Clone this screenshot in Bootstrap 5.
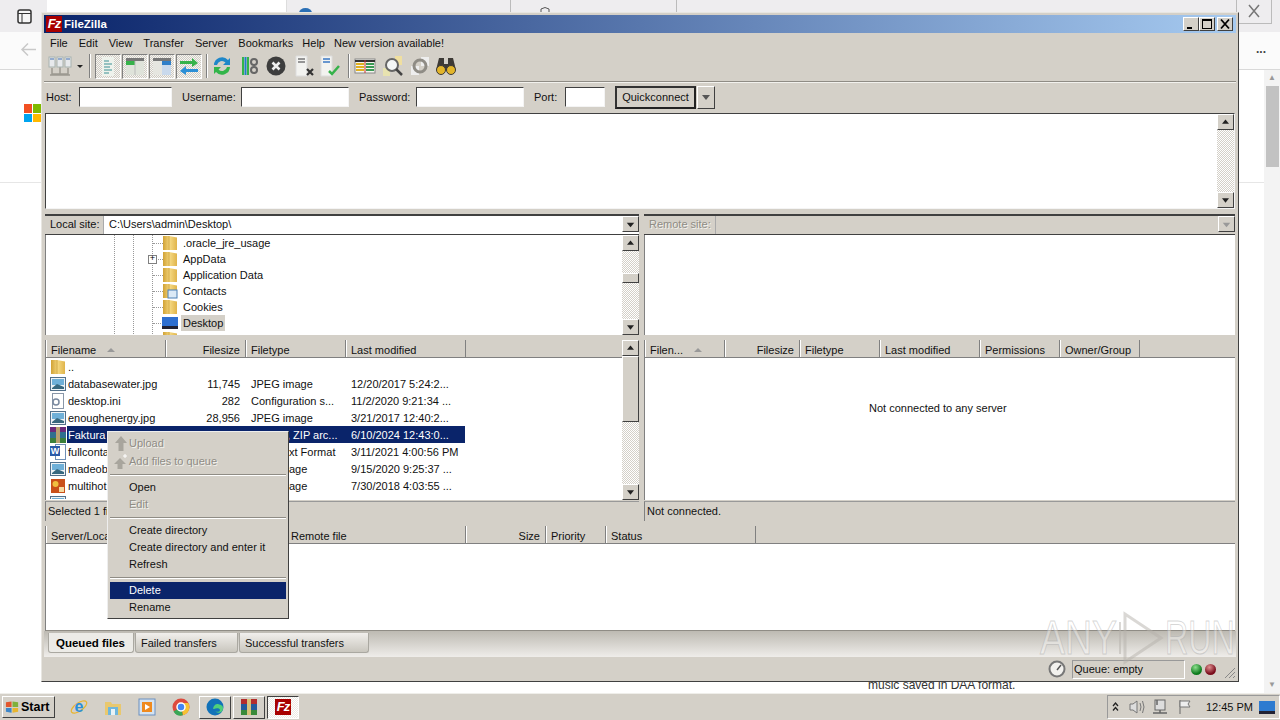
<!DOCTYPE html>
<html lang="en">
<head>
<meta charset="UTF-8">
<title>FileZilla</title>
<link href="https://cdn.jsdelivr.net/npm/bootstrap@5.3.3/dist/css/bootstrap.min.css" rel="stylesheet">
<style>
  html, body { width: 1280px; height: 720px; overflow: hidden; }
  body { font: 11px/14px "Liberation Sans", sans-serif; color: #111; background: #fff; position: relative; }
  svg { display: block; flex: none; }

  /* pixel widths and small gaps used by the columns and toolbar */
  .w40 { width: 40px; } .w60 { width: 60px; } .w72 { width: 72px; } .w75 { width: 75px; } .w80 { width: 80px; }
  .w93 { width: 93px; } .w100 { width: 100px; } .w108 { width: 108px; } .w120 { width: 120px; } .w150 { width: 150px; } .w180 { width: 180px; }
  .ml2 { margin-left: 2px; } .ml3 { margin-left: 3px; } .ml4 { margin-left: 4px; } .ml5 { margin-left: 5px; } .ml6 { margin-left: 6px; } .ml7 { margin-left: 7px; } .ml8 { margin-left: 8px; } .ml9 { margin-left: 9px; }
  .mr3 { margin-right: 3px; } .mr4 { margin-right: 4px; }

  /* browser behind the window */
  .br-wrap { height: 693px; }
  .br-strip { height: 32px; background: #eeedef; }
  .br-side { margin: 9px 0 0 17px; }
  .br-tab { width: 240px; height: 12px; margin-left: 15px; background: #fff; border-right: 1px solid #ddd; }
  .br-fav1 { margin: 8px 0 0 12px; }
  .br-tick { width: 1px; height: 12px; background: #bbb; flex: none; }
  .br-tick1 { margin-left: 198px; }
  .br-tick2 { margin-left: 126px; }
  .br-fav2 { margin: 7px 0 0 29px; }
  .br-ctl { margin: 0 8px 0 auto; width: 36px; height: 24px; border: 1px solid #bbb; border-top: 0; }
  .br-ctl svg { margin: 4px auto 0; }
  .br-bar { height: 38px; background: #fbfbfb; border-bottom: 1px solid #d9d9d9; }
  .br-back { margin: 10px 0 0 20px; }
  .br-dots { margin: 10px 6px 0 auto; font: bold 12px/14px "Liberation Sans", sans-serif; color: #444; width: 18px; }
  .br-page { height: 623px; }
  .ms-logo { width: 17px; height: 18px; margin: 34px 0 0 24px; display: grid; grid-template-columns: 1fr 1fr; gap: 1px; }
  .ms-logo i { display: block; }
  .ms-r { background: #f25022; } .ms-g { background: #7fba00; } .ms-b { background: #00a4ef; } .ms-y { background: #ffb900; }
  .br-line { height: 1px; background: #e6e6e6; margin-top: 60px; }
  .br-note { margin: auto 0 2px 868px; font-size: 12px; line-height: 12px; color: #333; }
  .br-scroll { width: 16px; background: #f3f3f3; }
  .br-arrow { height: 16px; text-align: center; color: #999; font-size: 8px; line-height: 16px; flex: none; }
  .br-thumb { height: 81px; width: 13px; margin: 0 auto; background: #c2c2c2; }

  /* filezilla window */
  .fz-win { position: absolute; left: 41px; top: 12px; width: 1198px; height: 670px; padding: 2px; background: #d4d0c8; border: 1px solid; border-color: #e8e6e1 #404040 #404040 #e8e6e1; }
  .fz-win > * { flex: none; }
  .fz-title { height: 18px; background: linear-gradient(90deg, #0a246a, #a6caf0); color: #fff; font-weight: bold; font-size: 11.5px; }
  .fz-logo { width: 16px; height: 16px; background: #a80000; color: #fff; font: italic bold 13px/16px "Liberation Sans", sans-serif; text-align: center; margin: 0 2px 0 2px; letter-spacing: -1px; flex: none; }
  .fz-winbtn { width: 16px; height: 14px; background: #d4d0c8; border: 1px solid; border-color: #fff #404040 #404040 #fff; }
  .fz-menu { height: 20px; padding-left: 6px; gap: 11px; }
  .fz-tight { margin-left: -2px; }
  .fz-tools { height: 29px; padding: 0 0 2px 4px; border-bottom: 1px solid #8f8c85; box-shadow: 0 1px 0 #f2f1ed; }
  .fz-sep { width: 2px; height: 24px; border-left: 1px solid #808080; border-right: 1px solid #fff; }
  .fz-toggle { width: 26px; height: 25px; margin-right: 1px; border: 1px solid; border-color: #808080 #fff #fff #808080; background: repeating-conic-gradient(#f6f5f2 0 25%, #cfcbc3 0 50%) 0 0/2px 2px; }
  .fz-quick { height: 30px; padding-left: 2px; margin-bottom: 1px; }
  .fz-lab { padding-left: 10px; box-sizing: content-box; }
  .fz-lab-host { width: 33px; padding-left: 0; }
  .fz-lab-user { width: 59px; } .fz-lab-pass { width: 57px; } .fz-lab-port { width: 31px; }
  .fz-input { height: 20px; background: #fff; border: 1px solid; border-color: #404040 #f4f4f4 #f4f4f4 #404040; }
  .fz-qbtn { width: 81px; height: 23px; border: 2px solid; border-color: #333 #222 #222 #333; text-align: center; line-height: 18px; margin-left: 10px; }
  .fz-qarrow { width: 18px; height: 23px; margin-left: 1px; border: 1px solid; border-color: #fff #404040 #404040 #fff; }

  .fz-sunken { background: #fff; border: 1px solid; border-color: #404040 #f4f4f4 #f4f4f4 #404040; }
  .fz-log { height: 96px; margin: 0 1px; }
  .fz-panes { margin-top: 5px; display: grid; grid-template-columns: 594px 591px; column-gap: 5px; padding-left: 1px; }
  .fz-site { height: 21px; border-top: 2px solid #404040; border-bottom: 1px solid #404040; background: #fff; }
  .fz-site-off { background: #d4d0c8; }
  .fz-site-label { width: 59px; padding-left: 5px; background: #d4d0c8; border-right: 1px solid #aaa; line-height: 17px; height: 100%; flex: none; }
  .fz-site-remote { width: 72px; }
  .fz-path { line-height: 17px; padding-left: 5px; }
  .fz-drop { width: 17px; }
  .fz-tree { height: 100px; background: #fff; border-left: 1px solid #808080; }
  .fz-tree-body {
    overflow: hidden; position: relative;
    background:
      repeating-linear-gradient(#999 0 1px, transparent 1px 2px) 68px 0/1px 100% no-repeat,
      repeating-linear-gradient(#999 0 1px, transparent 1px 2px) 87px 0/1px 100% no-repeat,
      repeating-linear-gradient(#999 0 1px, transparent 1px 2px) 106px 0/1px 100% no-repeat;
  }
  .fz-node { height: 16px; padding-left: 116px; position: relative; line-height: 16px; }
  .fz-node::before { content: ""; position: absolute; left: 107px; top: 8px; width: 10px; border-top: 1px dotted #999; }
  .fz-node svg { margin-right: 5px; position: relative; }
  .fz-cur { background: #d4d0c8; padding: 0 2px; margin-left: -2px; }
  .fz-plus { position: absolute; left: 102px; top: 4px; width: 9px; height: 9px; background: #fff; border: 1px solid #808080; font: 9px/7px "Liberation Mono", monospace; text-align: center; z-index: 1; color: #000; }

  .fz-sb { width: 17px; flex: none; background: repeating-conic-gradient(#fff 0 25%, #d4d0c8 0 50%) 0 0/2px 2px; }
  .fz-sbbtn { height: 16px; background: #d4d0c8; border: 1px solid; border-color: #fff #404040 #404040 #fff; flex: none; }
  .fz-thumb { background: #d4d0c8; border: 1px solid; border-color: #fff #404040 #404040 #fff; flex: none; }
  .fz-thumb-tree { height: 10px; margin-top: 22px; }
  .fz-thumb-list { height: 66px; }

  .fz-list { height: 160px; margin-top: 5px; background: #fff; border-left: 1px solid #808080; }
  .fz-head { height: 18px; background: #d4d0c8; border-bottom: 1px solid #808080; }
  .fz-hc { height: 17px; padding: 0 5px 0 4px; line-height: 21px; border-right: 1px solid #808080; border-left: 1px solid #fff; white-space: nowrap; overflow: hidden; flex: none; }
  .fz-sort { display: inline-block; margin-left: 8px; border: 4px solid transparent; border-top: 0; border-bottom: 4px solid #999; vertical-align: 2px; }
  .fz-rows { height: 141px; overflow: hidden; }
  .fz-row { height: 17px; line-height: 18px; }
  .fz-row > div { flex: none; white-space: nowrap; overflow: hidden; }
  .fz-name { width: 119px; padding-left: 4px; display: flex; align-items: center; gap: 2px; }
  .fz-size { width: 80px; text-align: right; padding-right: 5px; }
  .fz-type { width: 100px; padding-left: 6px; }
  .fz-type-zip { padding-left: 42px; }
  .fz-type-cut { padding-left: 44px; }
  .fz-date { width: 120px; padding-left: 6px; }
  .fz-sel .fz-name span, .fz-sel .fz-size, .fz-sel .fz-type, .fz-sel .fz-date { background: #0a246a; color: #fff; }
  .fz-sel .fz-name span { flex: 1; padding-left: 1px; margin-left: -1px; }
  .fz-stat { height: 20px; margin-top: 1px; border-left: 1px solid #808080; line-height: 18px; padding-left: 2px; background: #d4d0c8; border-top: 1px solid #999; }
  .fz-nocon { height: 141px; padding: 43px 0 0 224px; }

  .fz-queue { height: 105px; margin: 5px 0 0 1px; width: 1190px; background: #fff; border-left: 1px solid #808080; border-bottom: 1px solid #8f8c85; }
  .fz-tabs { height: 26px; padding: 2px 0 0 4px; background: linear-gradient(#bdbab2, #efedea); }
  .fz-tab { height: 20px; line-height: 20px; padding-left: 5px; margin-right: 1px; background: linear-gradient(#f1efec, #c9c6be); border: 1px solid #aaa8a1; border-top: 0; border-radius: 0 0 3px 3px; }
  .fz-tab-on { width: 86px; padding-left: 7px; background: #ecebe7; font-weight: bold; font-size: 11.5px; color: #000; }
  .fz-tab-fail { width: 103px; } .fz-tab-ok { width: 130px; }
  .fz-foot { height: 22px; padding-top: 2px; }
  .fz-gauge { margin-right: 6px; }
  .fz-qbox { width: 113px; height: 19px; border: 1px solid; border-color: #999 #fff #fff #999; line-height: 16px; padding-left: 1px; }
  .fz-ball { width: 11px; height: 11px; border-radius: 50%; }
  .fz-ball-g { margin-left: 6px; background: radial-gradient(circle at 40% 30%, #8fe08f, #0c7a1c 65%); }
  .fz-ball-r { margin-left: 3px; background: radial-gradient(circle at 40% 30%, #e09090, #7a0c1c 65%); }
  .fz-grip { margin: 6px 0 0 7px; }

  /* context menu */
  .fz-ctx { position: absolute; left: 65px; top: 418px; width: 182px; height: 188px; padding: 3px 2px; background: #d4d0c8; border: 1px solid; border-color: #eee #404040 #404040 #eee; z-index: 5; }
  .fz-item { height: 17px; line-height: 17px; padding-left: 19px; position: relative; }
  .fz-item svg { position: absolute; left: 3px; top: 0; }
  .fz-item-first { margin-bottom: 1px; }
  .fz-off { color: #8f8c85; text-shadow: 1px 1px 0 #f3f2ee; }
  .fz-hi { background: #0a246a; color: #fff; }
  .fz-rule { height: 2px; margin: 4px 0 3px; border-top: 1px solid #8f8c85; border-bottom: 1px solid #fff; }

  /* watermark */
  .wm { position: absolute; left: 1040px; top: 608px; width: 200px; height: 60px; z-index: 6; font: 48px/60px "Liberation Sans", sans-serif; pointer-events: none; color: rgba(255,255,255,.35); -webkit-text-stroke: 1px rgba(165,165,165,.45); white-space: nowrap; }
  .wm-any { width: 75px; display: inline-block; transform: scaleX(.78); transform-origin: left; }
  .wm-run { width: 70px; display: inline-block; transform: scaleX(.67); transform-origin: left; }

  /* taskbar */
  .tb { height: 27px; background: #d4d0c8; border-top: 1px solid #efeeea; position: relative; z-index: 7; }
  .tb-start { width: 53px; height: 22px; margin-left: 2px; border: 1px solid; border-color: #fff #404040 #404040 #fff; font: bold 12.500px/20px "Liberation Sans", sans-serif; color: #000; gap: 1px; padding-left: 2px; }
  .tb-apps { margin-left: 7px; }
  .tb-slot { width: 34px; height: 26px; }
  .tb-up { width: 32px; height: 23px; margin: 0 1px; border: 1px solid; border-color: #fff #404040 #404040 #fff; }
  .tb-cur { background: repeating-conic-gradient(#fff 0 25%, #ece9e4 0 50%) 0 0/2px 2px; border-color: #404040 #fff #fff #404040; }
  .tb-tray { width: 173px; height: 24px; margin-left: auto; border: 1px solid; border-color: #999 #fff #fff #999; }
  .tb-chev { width: 15px; flex: none; }
</style>
</head>
<body>
<svg width="0" height="0" class="position-absolute">
  <defs>
    <linearGradient id="g-folder" x1="0" x2="1" y1="0" y2="0">
      <stop offset="0" stop-color="#d1a235"/><stop offset=".5" stop-color="#f4d77f"/><stop offset="1" stop-color="#e0b44a"/>
    </linearGradient>
    <symbol id="i-folder" viewBox="0 0 16 16">
      <path d="M1 1h6l8 1.500V15H1z" fill="url(#g-folder)"/><path d="M7 1v14" stroke="#c4952c" stroke-width=".6"/>
    </symbol>
    <symbol id="i-image" viewBox="0 0 16 16">
      <rect x="0.500" y="1.500" width="15" height="13" fill="#eef3f6" stroke="#52708a"/><rect x="2" y="3" width="12" height="6" fill="#6fb0d8"/><path d="M2 12l5-4 7 3v2H2z" fill="#37687f"/>
    </symbol>
    <symbol id="i-arrdown" viewBox="0 0 16 16"><path d="M4 6h8l-4 5z" fill="#222"/></symbol>
    <symbol id="i-arrup" viewBox="0 0 16 16"><path d="M4 10h8l-4-5z" fill="#222"/></symbol>
  </defs>
</svg>

<div class="br-wrap d-flex flex-column">
  <div class="br-strip d-flex align-items-start">
    <svg class="br-side" width="15" height="15" viewBox="0 0 15 15"><rect x="1" y="1" width="13" height="13" rx="2" fill="#f6f6f6" stroke="#333" stroke-width="1.500"/><path d="M1 4.500h13M5 4.500V14" stroke="#333"/></svg>
    <div class="br-tab"></div>
    <svg class="br-fav1" width="13" height="5" viewBox="0 0 13 5"><path d="M0 5a6.500 5 0 0 1 13 0z" fill="#2a6fb5"/></svg>
    <div class="br-tick br-tick1"></div>
    <svg class="br-fav2" width="10" height="5" viewBox="0 0 10 5"><path d="M1 5V2q4-3 8 0v3" fill="none" stroke="#555"/></svg>
    <div class="br-tick br-tick2"></div>
    <div class="br-ctl"><svg width="12" height="14" viewBox="0 0 12 14"><path d="M1 1l10 12M11 1L1 13" stroke="#777" stroke-width="1.500"/></svg></div>
  </div>
  <div class="br-bar d-flex">
    <svg class="br-back" width="17" height="15" viewBox="0 0 17 15"><path d="M16 7.500H2M8 1.500l-6 6 6 6" fill="none" stroke="#c9c9c9" stroke-width="1.500"/></svg>
    <div class="br-dots">...</div>
  </div>
  <div class="br-page d-flex">
    <div class="flex-grow-1 d-flex flex-column">
      <div class="ms-logo"><i class="ms-r"></i><i class="ms-g"></i><i class="ms-b"></i><i class="ms-y"></i></div>
      <div class="br-line"></div>
      <div class="br-note">music saved in DAA format.</div>
    </div>
    <div class="br-scroll d-flex flex-column"><div class="br-arrow">&#9650;</div><div class="br-thumb"></div><div class="br-arrow mt-auto">&#9660;</div></div>
  </div>
</div>

<div class="fz-win d-flex flex-column">
  <div class="fz-title d-flex align-items-center">
    <div class="fz-logo">Fz</div><div class="flex-grow-1">FileZilla</div>
    <div class="fz-winbtn"><svg width="14" height="12" viewBox="0 0 14 12"><path d="M3 10h5" stroke="#000" stroke-width="2"/></svg></div>
    <div class="fz-winbtn"><svg width="14" height="12" viewBox="0 0 14 12"><rect x="2.500" y="1.500" width="9" height="9" fill="none" stroke="#000"/><path d="M2 2h10" stroke="#000" stroke-width="2"/></svg></div>
    <div class="fz-winbtn ml2 mr3"><svg width="14" height="12" viewBox="0 0 14 12"><path d="M3 1.500l8 9M11 1.500l-8 9" stroke="#000" stroke-width="1.800"/></svg></div>
  </div>
  <div class="fz-menu d-flex align-items-center">
    <span>File</span><span>Edit</span><span>View</span><span>Transfer</span><span>Server</span><span>Bookmarks</span><span class="fz-tight">Help</span><span class="fz-tight">New version available!</span>
  </div>
  <div class="fz-tools d-flex align-items-center">
    <svg width="24" height="24" viewBox="0 0 24 24" opacity=".75"><path d="M4 14v6h16v-6M12 13v7M2 21h20" fill="none" stroke="#8a877f" stroke-width="1.500"/><rect x="1" y="3" width="6" height="10" fill="#eef2f8" stroke="#9aa"/><rect x="9" y="3" width="6" height="10" fill="#eef2f8" stroke="#9aa"/><rect x="17" y="3" width="6" height="10" fill="#eef2f8" stroke="#9aa"/><path d="M2 5h4M10 5h4M18 5h4" stroke="#5b84c4" stroke-width="1.500"/></svg>
    <svg class="ms-1" width="9" height="24" viewBox="0 0 9 24"><path d="M1 11h6l-3 3z" fill="#222"/></svg>
    <div class="fz-sep ms-1 me-1"></div>
    <div class="fz-toggle"><svg width="24" height="23" viewBox="0 0 24 23"><rect x="6" y="2" width="12" height="19" fill="#eef2ec"/><path d="M8 6h5M8 9h8M8 12h6M8 15h8M8 18h5" stroke="#3a8f93" stroke-width="1.200"/></svg></div>
    <div class="fz-toggle"><svg width="24" height="23" viewBox="0 0 24 23"><rect x="3" y="3" width="18" height="17" fill="#dfe3da"/><path d="M3 3h18v3H3z" fill="#777"/><rect x="3" y="6" width="9" height="4" fill="#36b24a"/><path d="M12 6v14" stroke="#bbb"/></svg></div>
    <div class="fz-toggle"><svg width="24" height="23" viewBox="0 0 24 23"><rect x="3" y="3" width="18" height="17" fill="#e6e6e0"/><path d="M3 3h18v3H3z" fill="#777"/><rect x="12" y="6" width="9" height="14" fill="#c9d9ec"/><rect x="12" y="6" width="9" height="4" fill="#2f7fc9"/></svg></div>
    <div class="fz-toggle"><svg width="24" height="23" viewBox="0 0 24 23"><path d="M3 6h12V3l6 5-6 4V9H3z" fill="#36b24a"/><path d="M21 14H9v-3l-6 5 6 4v-3h12z" fill="#2b8fd6"/></svg></div>
    <div class="fz-sep ml3 mr3"></div>
    <svg width="22" height="24" viewBox="0 0 22 24"><path d="M3 11a8 8 0 0 1 14-5l2-2v7h-7l2.500-2.500A5 5 0 0 0 6 11z" fill="#1f87c9"/><path d="M19 13a8 8 0 0 1-14 5l-2 2v-7h7l-2.500 2.500A5 5 0 0 0 16 13z" fill="#33b54a"/></svg>
    <svg class="ml6" width="24" height="24" viewBox="0 0 24 24"><path d="M4 3v18M9 3v18" stroke="#33b54a" stroke-width="2"/><path d="M6.500 3v18" stroke="#1f7fc9" stroke-width="2"/><circle cx="15" cy="8" r="3" fill="none" stroke="#666" stroke-width="2"/><circle cx="15" cy="16" r="3" fill="none" stroke="#666" stroke-width="2"/></svg>
    <svg class="ml2" width="22" height="24" viewBox="0 0 22 24"><circle cx="11" cy="12" r="9.500" fill="#3d3d3d"/><path d="M7.500 8.500l7 7M14.500 8.500l-7 7" stroke="#eee" stroke-width="2.600"/></svg>
    <svg class="ml6" width="24" height="24" viewBox="0 0 24 24"><path d="M3 2h11v20H3z" fill="#f3f3f0" stroke="#ddd"/><path d="M5 5h7M5 8h7" stroke="#777" stroke-width="1.500"/><path d="M14 15l6 6M20 15l-6 6" stroke="#333" stroke-width="2.200"/></svg>
    <svg width="26" height="24" viewBox="0 0 26 24"><path d="M4 2h11v20H4z" fill="#f3f3f0" stroke="#ddd"/><path d="M6 5h7M6 8h7" stroke="#3b78c4" stroke-width="1.500"/><path d="M12 17l3 3 7-8" fill="none" stroke="#36b24a" stroke-width="2.500"/></svg>
    <div class="fz-sep ml5 mr4"></div>
    <svg width="22" height="24" viewBox="0 0 22 24"><rect x="1" y="5" width="20" height="14" fill="#f5f5ef" stroke="#888"/><path d="M1 7h20" stroke="#333" stroke-width="2"/><path d="M2 10h8M2 13h8M2 16h8" stroke="#e0b020" stroke-width="2"/><path d="M12 10h8M12 13h8M12 16h8" stroke="#3b9a55" stroke-width="2"/><path d="M11 6v13" stroke="#c33"/></svg>
    <svg class="ml5" width="24" height="24" viewBox="0 0 24 24"><rect x="14" y="2" width="7" height="9" fill="#f0dfa0"/><rect x="2" y="14" width="7" height="8" fill="#e8e3b0"/><circle cx="11" cy="11" r="6" fill="#f4f6f6" stroke="#666" stroke-width="2"/><path d="M15 15l6 6" stroke="#444" stroke-width="2.500"/></svg>
    <svg class="ml4" width="22" height="24" viewBox="0 0 22 24"><rect x="12" y="3" width="8" height="9" fill="#eee"/><rect x="2" y="12" width="8" height="9" fill="#eee"/><circle cx="11" cy="12" r="6" fill="none" stroke="#8f8c85" stroke-width="3"/></svg>
    <svg class="ml3" width="24" height="24" viewBox="0 0 24 24"><path d="M5 4h5v6h4V4h5l3 12H2z" fill="#3d3a36"/><circle cx="7" cy="16" r="4.500" fill="#e3b52b" stroke="#3d3a36"/><circle cx="17" cy="16" r="4.500" fill="#e3b52b" stroke="#3d3a36"/></svg>
  </div>
  <div class="fz-quick d-flex align-items-center">
    <span class="fz-lab fz-lab-host">Host:</span><div class="fz-input w93"></div>
    <span class="fz-lab fz-lab-user">Username:</span><div class="fz-input w108"></div>
    <span class="fz-lab fz-lab-pass">Password:</span><div class="fz-input w108"></div>
    <span class="fz-lab fz-lab-port">Port:</span><div class="fz-input w40"></div>
    <div class="fz-qbtn">Quickconnect</div>
    <div class="fz-qarrow"><svg width="16" height="21" viewBox="0 0 16 21"><path d="M4 8h8l-4 5z" fill="#555"/></svg></div>
  </div>
  <div class="fz-sunken fz-log d-flex">
    <div class="flex-grow-1"></div>
    <div class="fz-sb d-flex flex-column justify-content-between">
      <div class="fz-sbbtn"><svg width="15" height="14"><use href="#i-arrup"/></svg></div>
      <div class="fz-sbbtn"><svg width="15" height="14"><use href="#i-arrdown"/></svg></div>
    </div>
  </div>

  <div class="fz-panes">
    <!-- local -->
    <div>
      <div class="fz-site d-flex">
        <div class="fz-site-label">Local site:</div><div class="fz-path flex-grow-1">C:\Users\admin\Desktop\</div>
        <div class="fz-sbbtn fz-drop"><svg width="15" height="15"><use href="#i-arrdown"/></svg></div>
      </div>
      <div class="fz-tree d-flex">
        <div class="fz-tree-body flex-grow-1">
          <div class="fz-node d-flex align-items-center"><svg width="16" height="16"><use href="#i-folder"/></svg>.oracle_jre_usage</div>
          <div class="fz-node d-flex align-items-center"><div class="fz-plus">+</div><svg width="16" height="16"><use href="#i-folder"/></svg>AppData</div>
          <div class="fz-node d-flex align-items-center"><svg width="16" height="16"><use href="#i-folder"/></svg>Application Data</div>
          <div class="fz-node d-flex align-items-center"><svg width="16" height="16" viewBox="0 0 16 16"><use href="#i-folder" width="16" height="16"/><rect x="6" y="7" width="9" height="8" fill="#dbe9f6" stroke="#4a7fb5"/></svg>Contacts</div>
          <div class="fz-node d-flex align-items-center"><svg width="16" height="16"><use href="#i-folder"/></svg>Cookies</div>
          <div class="fz-node d-flex align-items-center"><svg width="16" height="16" viewBox="0 0 16 16"><rect y="2" width="16" height="11" fill="#2e6fd0"/><path d="M0 11h16v3H0z" fill="#223"/></svg><span class="fz-cur">Desktop</span></div>
          <div class="fz-node d-flex align-items-center"><svg width="16" height="16"><use href="#i-folder"/></svg></div>
        </div>
        <div class="fz-sb d-flex flex-column">
          <div class="fz-sbbtn"><svg width="15" height="14"><use href="#i-arrup"/></svg></div>
          <div class="fz-thumb fz-thumb-tree"></div>
          <div class="fz-sbbtn mt-auto"><svg width="15" height="14"><use href="#i-arrdown"/></svg></div>
        </div>
      </div>
      <div class="fz-list d-flex">
        <div class="flex-grow-1">
          <div class="fz-head d-flex">
            <div class="fz-hc w120">Filename <i class="fz-sort"></i></div>
            <div class="fz-hc w80 text-end">Filesize</div>
            <div class="fz-hc w100">Filetype</div>
            <div class="fz-hc w120">Last modified</div>
          </div>
          <div class="fz-rows">
            <div class="fz-row d-flex"><div class="fz-name"><svg width="16" height="16"><use href="#i-folder"/></svg><span>..</span></div></div>
            <div class="fz-row d-flex"><div class="fz-name"><svg width="16" height="16"><use href="#i-image"/></svg><span>databasewater.jpg</span></div><div class="fz-size">11,745</div><div class="fz-type">JPEG image</div><div class="fz-date">12/20/2017 5:24:2...</div></div>
            <div class="fz-row d-flex"><div class="fz-name"><svg width="16" height="16" viewBox="0 0 16 16"><rect x="2.500" y="0.500" width="11" height="15" fill="#fff" stroke="#8a97a8"/><circle cx="6" cy="9" r="3" fill="none" stroke="#7a8aa0" stroke-width="1.500"/></svg><span>desktop.ini</span></div><div class="fz-size">282</div><div class="fz-type">Configuration s...</div><div class="fz-date">11/2/2020 9:21:34 ...</div></div>
            <div class="fz-row d-flex"><div class="fz-name"><svg width="16" height="16"><use href="#i-image"/></svg><span>enoughenergy.jpg</span></div><div class="fz-size">28,956</div><div class="fz-type">JPEG image</div><div class="fz-date">3/21/2017 12:40:2...</div></div>
            <div class="fz-row d-flex fz-sel"><div class="fz-name"><svg width="16" height="16" viewBox="0 0 16 16"><rect width="16" height="5" fill="#6a2a7a"/><rect y="5" width="16" height="6" fill="#2f6f8f"/><rect y="11" width="16" height="5" fill="#3a7f3a"/><rect x="6" width="4" height="16" fill="#b8a070"/></svg><span>Faktura</span></div><div class="fz-size"></div><div class="fz-type fz-type-zip">, ZIP arc...</div><div class="fz-date">6/10/2024 12:43:0...</div></div>
            <div class="fz-row d-flex"><div class="fz-name"><svg width="16" height="16" viewBox="0 0 16 16"><rect x="5.500" y="0.500" width="10" height="15" fill="#fff" stroke="#6f8fb5"/><rect x="0" y="2" width="10" height="10" fill="#2a5aa8"/><text x="5" y="10" font-size="9" font-weight="bold" text-anchor="middle" fill="#fff" font-family="Liberation Sans">W</text></svg><span>fullconta</span></div><div class="fz-size"></div><div class="fz-type fz-type-cut">xt Format</div><div class="fz-date">3/11/2021 4:00:56 PM</div></div>
            <div class="fz-row d-flex"><div class="fz-name"><svg width="16" height="16"><use href="#i-image"/></svg><span>madeoby</span></div><div class="fz-size"></div><div class="fz-type fz-type-cut">age</div><div class="fz-date">9/15/2020 9:25:37 ...</div></div>
            <div class="fz-row d-flex"><div class="fz-name"><svg width="16" height="16" viewBox="0 0 16 16"><rect x="1" y="1" width="14" height="14" fill="#c9501a"/><circle cx="5.500" cy="6" r="3" fill="#f0c040"/><rect x="9" y="9" width="5" height="5" fill="#f6d9a0"/></svg><span>multihot</span></div><div class="fz-size"></div><div class="fz-type fz-type-cut">age</div><div class="fz-date">7/30/2018 4:03:55 ...</div></div>
            <div class="fz-row d-flex"><div class="fz-name"><svg width="16" height="16"><use href="#i-image"/></svg></div></div>
          </div>
        </div>
        <div class="fz-sb d-flex flex-column">
          <div class="fz-sbbtn"><svg width="15" height="14"><use href="#i-arrup"/></svg></div>
          <div class="fz-thumb fz-thumb-list"></div>
          <div class="fz-sbbtn mt-auto"><svg width="15" height="14"><use href="#i-arrdown"/></svg></div>
        </div>
      </div>
      <div class="fz-stat">Selected 1 fi</div>
    </div>

    <!-- remote -->
    <div>
      <div class="fz-site fz-site-off d-flex">
        <div class="fz-site-label fz-site-remote fz-off">Remote site:</div><div class="flex-grow-1"></div>
        <div class="fz-sbbtn fz-drop"><svg width="15" height="15" viewBox="0 0 16 16"><path d="M4 6h8l-4 5z" fill="#999"/></svg></div>
      </div>
      <div class="fz-tree"></div>
      <div class="fz-list">
        <div class="fz-head d-flex">
          <div class="fz-hc w80">Filen... <i class="fz-sort"></i></div>
          <div class="fz-hc w75 text-end">Filesize</div>
          <div class="fz-hc w80">Filetype</div>
          <div class="fz-hc w100">Last modified</div>
          <div class="fz-hc w80">Permissions</div>
          <div class="fz-hc w80">Owner/Group</div>
        </div>
        <div class="fz-nocon">Not connected to any server</div>
      </div>
      <div class="fz-stat">Not connected.</div>
    </div>
  </div>

  <div class="fz-queue">
    <div class="fz-head d-flex">
      <div class="fz-hc w120">Server/Loca</div>
      <div class="fz-hc w120"></div>
      <div class="fz-hc w180">Remote file</div>
      <div class="fz-hc w80 text-end">Size</div>
      <div class="fz-hc w60">Priority</div>
      <div class="fz-hc w150">Status</div>
    </div>
  </div>
  <div class="fz-tabs d-flex">
    <div class="fz-tab fz-tab-on">Queued files</div>
    <div class="fz-tab fz-tab-fail">Failed transfers</div>
    <div class="fz-tab fz-tab-ok">Successful transfers</div>
  </div>
  <div class="fz-foot d-flex align-items-center justify-content-end">
    <svg class="fz-gauge" width="18" height="18" viewBox="0 0 18 18"><circle cx="9" cy="9" r="7.500" fill="#f2f1ee" stroke="#777" stroke-width="2"/><path d="M9 10l4-5" stroke="#555" stroke-width="1.500"/></svg>
    <div class="fz-qbox">Queue: empty</div>
    <div class="fz-ball fz-ball-g"></div>
    <div class="fz-ball fz-ball-r"></div>
    <svg class="fz-grip" width="13" height="13" viewBox="0 0 13 13"><path d="M2 12L12 2M6 12l6-6M10 12l2-2" stroke="#888"/></svg>
  </div>

  <div class="fz-ctx">
    <div class="fz-item fz-item-first fz-off"><svg width="16" height="17" viewBox="0 0 16 17"><path d="M8 1l6 7h-3.500v8h-5V8H2z" fill="#a8a59d"/></svg>Upload</div>
    <div class="fz-item fz-off"><svg width="16" height="17" viewBox="0 0 16 17"><path d="M7 5l6 6H9.500v5h-5v-5H1z" fill="#a8a59d"/><path d="M12 1v4M10 3h4" stroke="#fff"/></svg>Add files to queue</div>
    <div class="fz-rule"></div>
    <div class="fz-item">Open</div>
    <div class="fz-item fz-off">Edit</div>
    <div class="fz-rule"></div>
    <div class="fz-item">Create directory</div>
    <div class="fz-item">Create directory and enter it</div>
    <div class="fz-item">Refresh</div>
    <div class="fz-rule"></div>
    <div class="fz-item fz-hi">Delete</div>
    <div class="fz-item">Rename</div>
  </div>
</div>

<div class="wm d-flex align-items-center">
  <span class="wm-any">ANY</span>
  <svg width="50" height="60" viewBox="0 0 50 60"><path d="M10 6v48l36-24z" fill="none" stroke="#b5b2ab" stroke-opacity=".5" stroke-width="3"/><path d="M5 14v32" stroke="#b5b2ab" stroke-opacity=".5" stroke-width="2"/></svg>
  <span class="wm-run">RUN</span>
</div>

<div class="tb d-flex align-items-center">
  <div class="tb-start d-flex align-items-center">
    <svg width="15" height="16" viewBox="0 0 16 16"><path d="M1 3l6-1v6H1z" fill="#e2562d"/><path d="M8 2l6 1v5H8z" fill="#7fb03c"/><path d="M1 9h6v5l-6-1z" fill="#3d86c9"/><path d="M8 9h6v4l-6 1z" fill="#e8b52f"/></svg>Start
  </div>
  <div class="tb-apps d-flex align-items-center">
    <div class="tb-slot d-flex align-items-center justify-content-center"><svg width="18" height="18" viewBox="0 0 18 18"><ellipse cx="9" cy="9" rx="9" ry="4" fill="none" stroke="#e8b52f" stroke-width="1.200" transform="rotate(-35 9 9)"/><text x="9" y="14" text-anchor="middle" font-size="16" font-weight="bold" fill="#2b8fd6" font-family="Liberation Sans">e</text></svg></div>
    <div class="tb-slot d-flex align-items-center justify-content-center"><svg width="18" height="18" viewBox="0 0 18 18"><path d="M1 4h6l1 2h9v11H1z" fill="#e9c86e"/><path d="M4 9h10v8H4z" fill="#6fb6dd"/><path d="M7 11h4v6H7z" fill="#e9f2f6"/></svg></div>
    <div class="tb-slot d-flex align-items-center justify-content-center"><svg width="18" height="18" viewBox="0 0 18 18"><rect x="1" y="1" width="16" height="16" fill="#d5e3f0" stroke="#6a8fc0"/><rect x="4" y="4" width="10" height="10" fill="#ef8a1e"/><path d="M7 6l5 3-5 3z" fill="#fff"/></svg></div>
    <div class="tb-slot d-flex align-items-center justify-content-center"><svg width="18" height="18" viewBox="0 0 18 18"><circle cx="9" cy="9" r="8.500" fill="#dd4b3e"/><path d="M9 9L1.500 13.500A8.500 8.500 0 0 0 11 17.300z" fill="#3aa757"/><path d="M9 5h7.300A8.500 8.500 0 0 1 11 17.300z" fill="#f6c233"/><circle cx="9" cy="9" r="4" fill="#4285f4" stroke="#fff" stroke-width="1.500"/></svg></div>
    <div class="tb-up d-flex align-items-center justify-content-center"><svg width="18" height="18" viewBox="0 0 18 18"><circle cx="9" cy="9" r="8.500" fill="#1272b8"/><path d="M17 10a4.500 4.500 0 0 1-8 3c2 1.500 5 1 5-1s-4-2-6-1 0-6 4-5 5 2 5 4z" fill="#4fd07a"/></svg></div>
    <div class="tb-up d-flex align-items-center justify-content-center"><svg width="18" height="18" viewBox="0 0 18 18"><rect x="1" y="1" width="16" height="5" fill="#b32d2d"/><rect x="1" y="6" width="16" height="6" fill="#245a9c"/><rect x="1" y="12" width="16" height="5" fill="#3a8a3a"/><rect x="7" y="1" width="4" height="16" fill="#d9c27a"/></svg></div>
    <div class="tb-up tb-cur d-flex align-items-center justify-content-center"><div class="fz-logo m-0">Fz</div></div>
  </div>
  <div class="tb-tray d-flex align-items-center">
    <svg class="tb-chev" width="15" height="12" viewBox="0 0 15 12"><path d="M5 5l2.500-3 2.500 3M5 9.500l2.500-3 2.500 3" fill="none" stroke="#222" stroke-width="1.300"/></svg>
    <svg class="ml5" width="18" height="16" viewBox="0 0 18 16"><path d="M2 5h3l4-3v12l-4-3H2z" fill="#ddd" stroke="#777"/><path d="M12 4q2 4 0 8M14.500 2q3 6 0 12" fill="none" stroke="#777"/></svg>
    <svg class="ml6" width="16" height="16" viewBox="0 0 16 16"><rect x="3" y="1" width="10" height="10" fill="#ddd" stroke="#666"/><path d="M5 1v5M1 14h14M8 11v3" stroke="#666" stroke-width="1.500"/></svg>
    <svg class="ml9" width="16" height="16" viewBox="0 0 16 16"><path d="M3 1v14" stroke="#666"/><path d="M3 2h10l-2 3 2 3H3z" fill="#eee" stroke="#777"/></svg>
    <span class="ms-auto">12:45 PM</span>
    <svg class="ml6 mr4" width="16" height="13" viewBox="0 0 16 13"><rect width="16" height="13" fill="#2e7bd0"/><rect y="10" width="16" height="3" fill="#223"/></svg>
  </div>
</div>
</body>
</html>
